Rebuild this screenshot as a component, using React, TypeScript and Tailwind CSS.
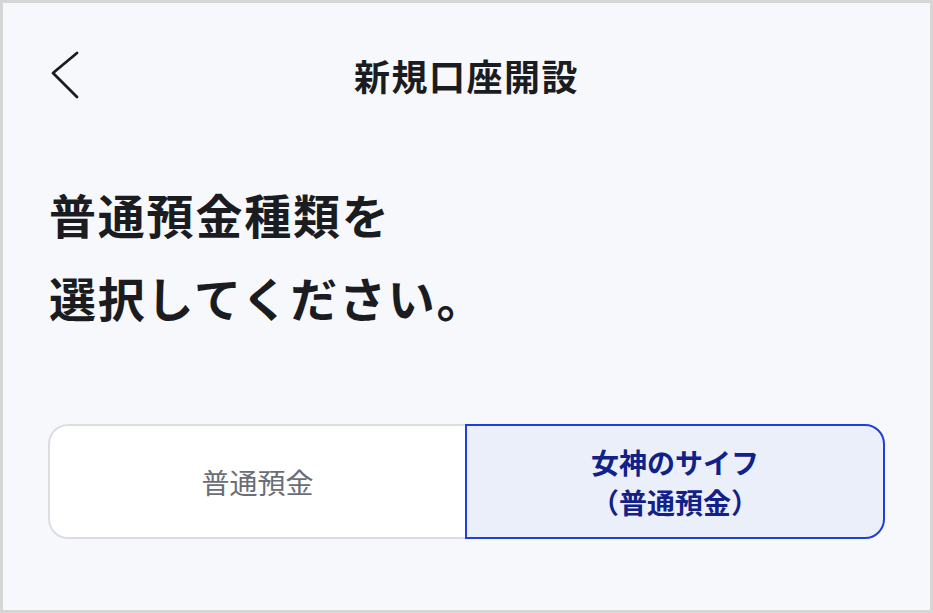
import React from "react";

export default function App() {
  return (
    <div
      className="w-[933px] h-[613px] border-[3px] border-[#d6d6d6] bg-[#f7f8fc] flex flex-col text-[#1b1c1f]"
      style={{ fontFamily: '"Noto Sans CJK JP", "Noto Sans", sans-serif' }}
    >
      <div className="relative h-[146px] flex items-start justify-center">
        <button className="absolute left-[47px] top-[47px] w-[30px] h-[50px]">
          <svg width="30" height="50" viewBox="0 0 30 50" fill="none">
            <path d="M27 3 L3 23 L27 47" stroke="#1b1c1f" strokeWidth="2.8" strokeLinecap="round" strokeLinejoin="round" />
          </svg>
        </button>
        <h1 className="text-[36px] font-bold tracking-[1.5px] leading-[40px] mt-[52px]">新規口座開設</h1>
      </div>
      <div className="pl-[46px] text-[47px] font-bold leading-[83px] mt-[23px] tracking-[1.8px]">
        <p>普通預金種類を</p>
        <p>選択してください。</p>
      </div>
      <div className="flex mt-[86px] ml-[45px] w-[837px] h-[115px]">
        <button className="flex-1 rounded-l-[20px] border-2 border-r-0 border-[#dcdde2] bg-white text-[#6b6e76] text-[28px] flex items-center justify-center">
          普通預金
        </button>
        <button className="w-[420px] rounded-r-[20px] border-2 border-[#1f3fd6] bg-[#ebeffa] text-[#102189] text-[28px] font-bold leading-[40px] flex flex-col items-center justify-center">
          <span>女神のサイフ</span>
          <span>（普通預金）</span>
        </button>
      </div>
    </div>
  );
}
